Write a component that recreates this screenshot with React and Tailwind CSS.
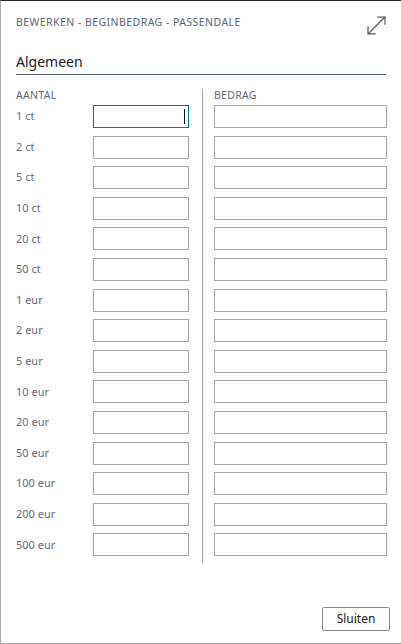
import { MoveDiagonal } from "lucide-react";

const rows = [
  "1 ct",
  "2 ct",
  "5 ct",
  "10 ct",
  "20 ct",
  "50 ct",
  "1 eur",
  "2 eur",
  "5 eur",
  "10 eur",
  "20 eur",
  "50 eur",
  "100 eur",
  "200 eur",
  "500 eur",
];

const font = { fontFamily: '"Noto Sans", "Open Sans", sans-serif' };

export default function App() {
  return (
    <div
      className="w-[401px] h-[644px] bg-white border-t border-t-[#262626] border-l border-l-[#a8a8a8] border-b border-b-[#a8a8a8] flex flex-col overflow-hidden"
      style={font}
    >
      {/* HEADER */}
      <div className="flex justify-between items-start pl-[15px] pr-[10px] pt-[14px]">
        <span className="text-[10.5px] leading-[14px] tracking-[0.45px] text-[#5d6673]">
          BEWERKEN - BEGINBEDRAG - PASSENDALE
        </span>
        <MoveDiagonal size={29} strokeWidth={1} className="text-[#5a5a5a] -mt-[4px]" />
      </div>

      {/* SECTION */}
      <div className="mx-[15px] mt-[12px] border-b border-[#505c6d] pb-[2px]">
        <span className="block text-[14px] leading-[20px] text-[#212121]">Algemeen</span>
      </div>

      <div className="flex pl-[15px] mt-[14px]">
        {/* AANTAL */}
        <div className="w-[173px] flex flex-col">
          <div className="text-[10.5px] leading-[12px] tracking-[0.3px] text-[#5d6673] h-[16px]">AANTAL</div>
          <div className="flex flex-col gap-[7.6px]">
            {rows.map((r, i) => (
              <div key={r} className="flex items-center h-[23px]">
                <span className="w-[77px] text-[11px] text-[#646d79]">{r}</span>
                {i === 0 ? (
                  <div className="w-[96px] h-[23px] border border-[#00807f] flex justify-end items-center pr-[3px]">
                    <span className="w-px h-[15px] bg-[#111]" />
                  </div>
                ) : (
                  <div className="w-[96px] h-[23px] border border-[#a6a6a6]" />
                )}
              </div>
            ))}
          </div>
        </div>

        <div className="w-px bg-[#a6a6a6] ml-[13px] mr-[11px] h-[474px]" />

        {/* BEDRAG */}
        <div className="w-[173px] flex flex-col">
          <div className="text-[10.5px] leading-[12px] tracking-[0.3px] text-[#5d6673] h-[16px]">BEDRAG</div>
          <div className="flex flex-col gap-[7.6px]">
            {rows.map((r) => (
              <div key={r} className="h-[23px] border border-[#a6a6a6]" />
            ))}
          </div>
        </div>
      </div>

      {/* FOOTER */}
      <div className="mt-auto flex justify-end pr-[11px] pb-[12px]">
        <button className="w-[68px] h-[24px] border border-[#8a8a8a] rounded-[2px] text-[12px] text-[#212121] bg-white">
          Sluiten
        </button>
      </div>
    </div>
  );
}
